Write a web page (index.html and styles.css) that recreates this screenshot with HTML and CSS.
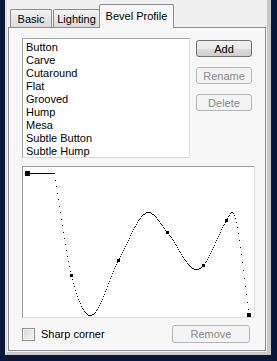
FILE: index.html
```html
<!DOCTYPE html>
<html lang="en">
<head>
    <meta charset="UTF-8">
    <title>Bevel Profile</title>
    <link rel="stylesheet" href="styles.css">
</head>
<body>
    <div class="frame">
        <div class="tabs">
            <div class="tab tab-basic">Basic</div>
            <div class="tab tab-lighting">Lighting</div>
            <div class="tab tab-active">Bevel Profile</div>
        </div>

        <div class="panel">
            <div class="top-row">
                <ul class="profile-list">
                    <li>Button</li>
                    <li>Carve</li>
                    <li>Cutaround</li>
                    <li>Flat</li>
                    <li>Grooved</li>
                    <li>Hump</li>
                    <li>Mesa</li>
                    <li>Subtle Button</li>
                    <li>Subtle Hump</li>
                </ul>
                <div class="side-buttons">
                    <button class="btn">Add</button>
                    <button class="btn" disabled>Rename</button>
                    <button class="btn" disabled>Delete</button>
                </div>
            </div>

            <div class="graph">
                <svg id="curve" width="231" height="150" viewBox="23 167 231 150"></svg>
            </div>

            <div class="bottom-row">
                <label class="check">
                    <span class="check-box"></span>
                    Sharp corner
                </label>
                <button class="btn btn-remove" disabled>Remove</button>
            </div>
        </div>
    </div>

    <script>
        // Profile curve points (page coordinates)
        var pts = [
            [54, 174], [71, 275], [90, 315], [118, 260], [148, 212],
            [167, 232], [196, 269], [203, 265], [226, 220], [232, 212], [249, 315]
        ];
        var markers = [[71, 275], [118, 260], [167, 232], [203, 265], [226, 220]];

        var svg = document.getElementById('curve');
        var NS = 'http://www.w3.org/2000/svg';

        function rect(x, y, w, h) {
            var r = document.createElementNS(NS, 'rect');
            r.setAttribute('x', x);
            r.setAttribute('y', y);
            r.setAttribute('width', w);
            r.setAttribute('height', h);
            svg.appendChild(r);
        }

        // monotone cubic slopes
        var n = pts.length, d = [], m = [];
        for (var i = 0; i < n - 1; i++) {
            d.push((pts[i + 1][1] - pts[i][1]) / (pts[i + 1][0] - pts[i][0]));
        }
        m[0] = d[0];
        m[n - 1] = d[n - 2];
        for (var i = 1; i < n - 1; i++) {
            m[i] = d[i - 1] * d[i] <= 0 ? 0 : (d[i - 1] + d[i]) / 2;
        }
        for (var i = 0; i < n - 1; i++) {
            if (d[i] === 0) { m[i] = 0; m[i + 1] = 0; continue; }
            var a = m[i] / d[i], b = m[i + 1] / d[i], s = a * a + b * b;
            if (s > 9) {
                var t = 3 / Math.sqrt(s);
                m[i] = t * a * d[i];
                m[i + 1] = t * b * d[i];
            }
        }

        function evalY(x) {
            for (var i = 0; i < n - 1; i++) {
                var x0 = pts[i][0], x1 = pts[i + 1][0];
                if (x >= x0 && x <= x1) {
                    var h = x1 - x0, t = (x - x0) / h;
                    var t2 = t * t, t3 = t2 * t;
                    return (2 * t3 - 3 * t2 + 1) * pts[i][1] + (t3 - 2 * t2 + t) * h * m[i] +
                        (-2 * t3 + 3 * t2) * pts[i + 1][1] + (t3 - t2) * h * m[i + 1];
                }
            }
            return 0;
        }

        // flat lead-in and start handle
        rect(27, 173, 28, 1);
        rect(25, 171, 5, 5);

        for (var x = 55; x <= 248; x++) {
            rect(x, Math.round(evalY(x)), 1, 1);
        }

        markers.forEach(function (p) { rect(p[0] - 1, p[1] - 1, 3, 3); });
        rect(247, 313, 4, 4);
    </script>
</body>
</html>
```

FILE: styles.css
```css
/* Dialog frame */
body {
    margin: 0;
    background-color: #0b1736;
    font-family: "Liberation Sans", Arial, sans-serif;
    font-size: 11px;
    color: #000;
}

.frame {
    box-sizing: border-box;
    width: 266px;
    height: 355px;
    margin-left: 5px;
    background: #f0f0f0;
    border-left: 2px solid #dedede;
    border-right: 4px solid #c8c8c8;
    border-bottom: 3px solid #c8c8c8;
}

/* Tabs */
.tabs {
    display: flex;
    align-items: flex-end;
    height: 27px;
    padding-left: 3px;
}

.tab {
    box-sizing: border-box;
    height: 18px;
    padding-top: 3px;
    text-align: center;
    border: 1px solid #898c95;
    border-bottom: none;
    border-radius: 2px 2px 0 0;
    background: linear-gradient(#f3f3f3, #e6e6e6 50%, #dcdcdc);
}

.tab-basic {
    width: 42px;
    margin-right: 1px;
}

.tab-lighting {
    width: 47px;
}

.tab-active {
    position: relative;
    z-index: 1;
    width: 75px;
    height: 24px;
    margin-bottom: -1px;
    margin-left: -1px;
    padding-top: 5px;
    background: #f7f7f7;
}

/* Tab page */
.panel {
    box-sizing: border-box;
    width: 258px;
    height: 324px;
    margin-left: 1px;
    padding: 10px 0 0 13px;
    border: 1px solid #898c95;
    background: #f7f7f7;
}

.top-row {
    display: flex;
}

.profile-list {
    box-sizing: border-box;
    width: 168px;
    height: 120px;
    margin: 0;
    padding: 2px 0 0 3px;
    list-style: none;
    background: #fff;
    border: 1px solid #a5a5a5;
    border-right-color: #dadada;
    border-bottom-color: #dadada;
}

.profile-list li {
    line-height: 13px;
    height: 13px;
}

.side-buttons {
    display: flex;
    flex-direction: column;
    gap: 10px;
    margin-left: 6px;
    padding-top: 2px;
}

/* Buttons */
.btn {
    box-sizing: border-box;
    width: 56px;
    height: 17px;
    padding: 0;
    font-family: inherit;
    font-size: 11px;
    color: #000;
    border: 1px solid #707070;
    border-radius: 3px;
    background: linear-gradient(#f2f2f2, #ebebeb 50%, #dddddd 50%, #cfcfcf);
}

.btn:disabled {
    color: #8a8a8a;
    border-color: #b5b8ba;
    background: #f4f4f4;
}

.btn-remove {
    width: 78px;
    height: 18px;
    margin-left: auto;
    margin-right: 15px;
}

/* Profile graph */
.graph {
    box-sizing: border-box;
    width: 233px;
    height: 152px;
    margin-top: 8px;
    background: #fff;
    border: 1px solid #a0a0a0;
    border-right-color: #dcdcdc;
    border-bottom-color: #dcdcdc;
}

.graph svg {
    display: block;
    shape-rendering: crispEdges;
    fill: #000;
}

/* Bottom row */
.bottom-row {
    display: flex;
    align-items: center;
    height: 18px;
    margin-top: 7px;
}

.check {
    display: flex;
    align-items: center;
    gap: 6px;
}

.check-box {
    box-sizing: border-box;
    width: 13px;
    height: 13px;
    border: 1px solid #8f8f8f;
    box-shadow: inset 0 0 0 1px #f4f4f4;
    background: linear-gradient(135deg, #d8d8d8, #f7f7f7);
}
```
